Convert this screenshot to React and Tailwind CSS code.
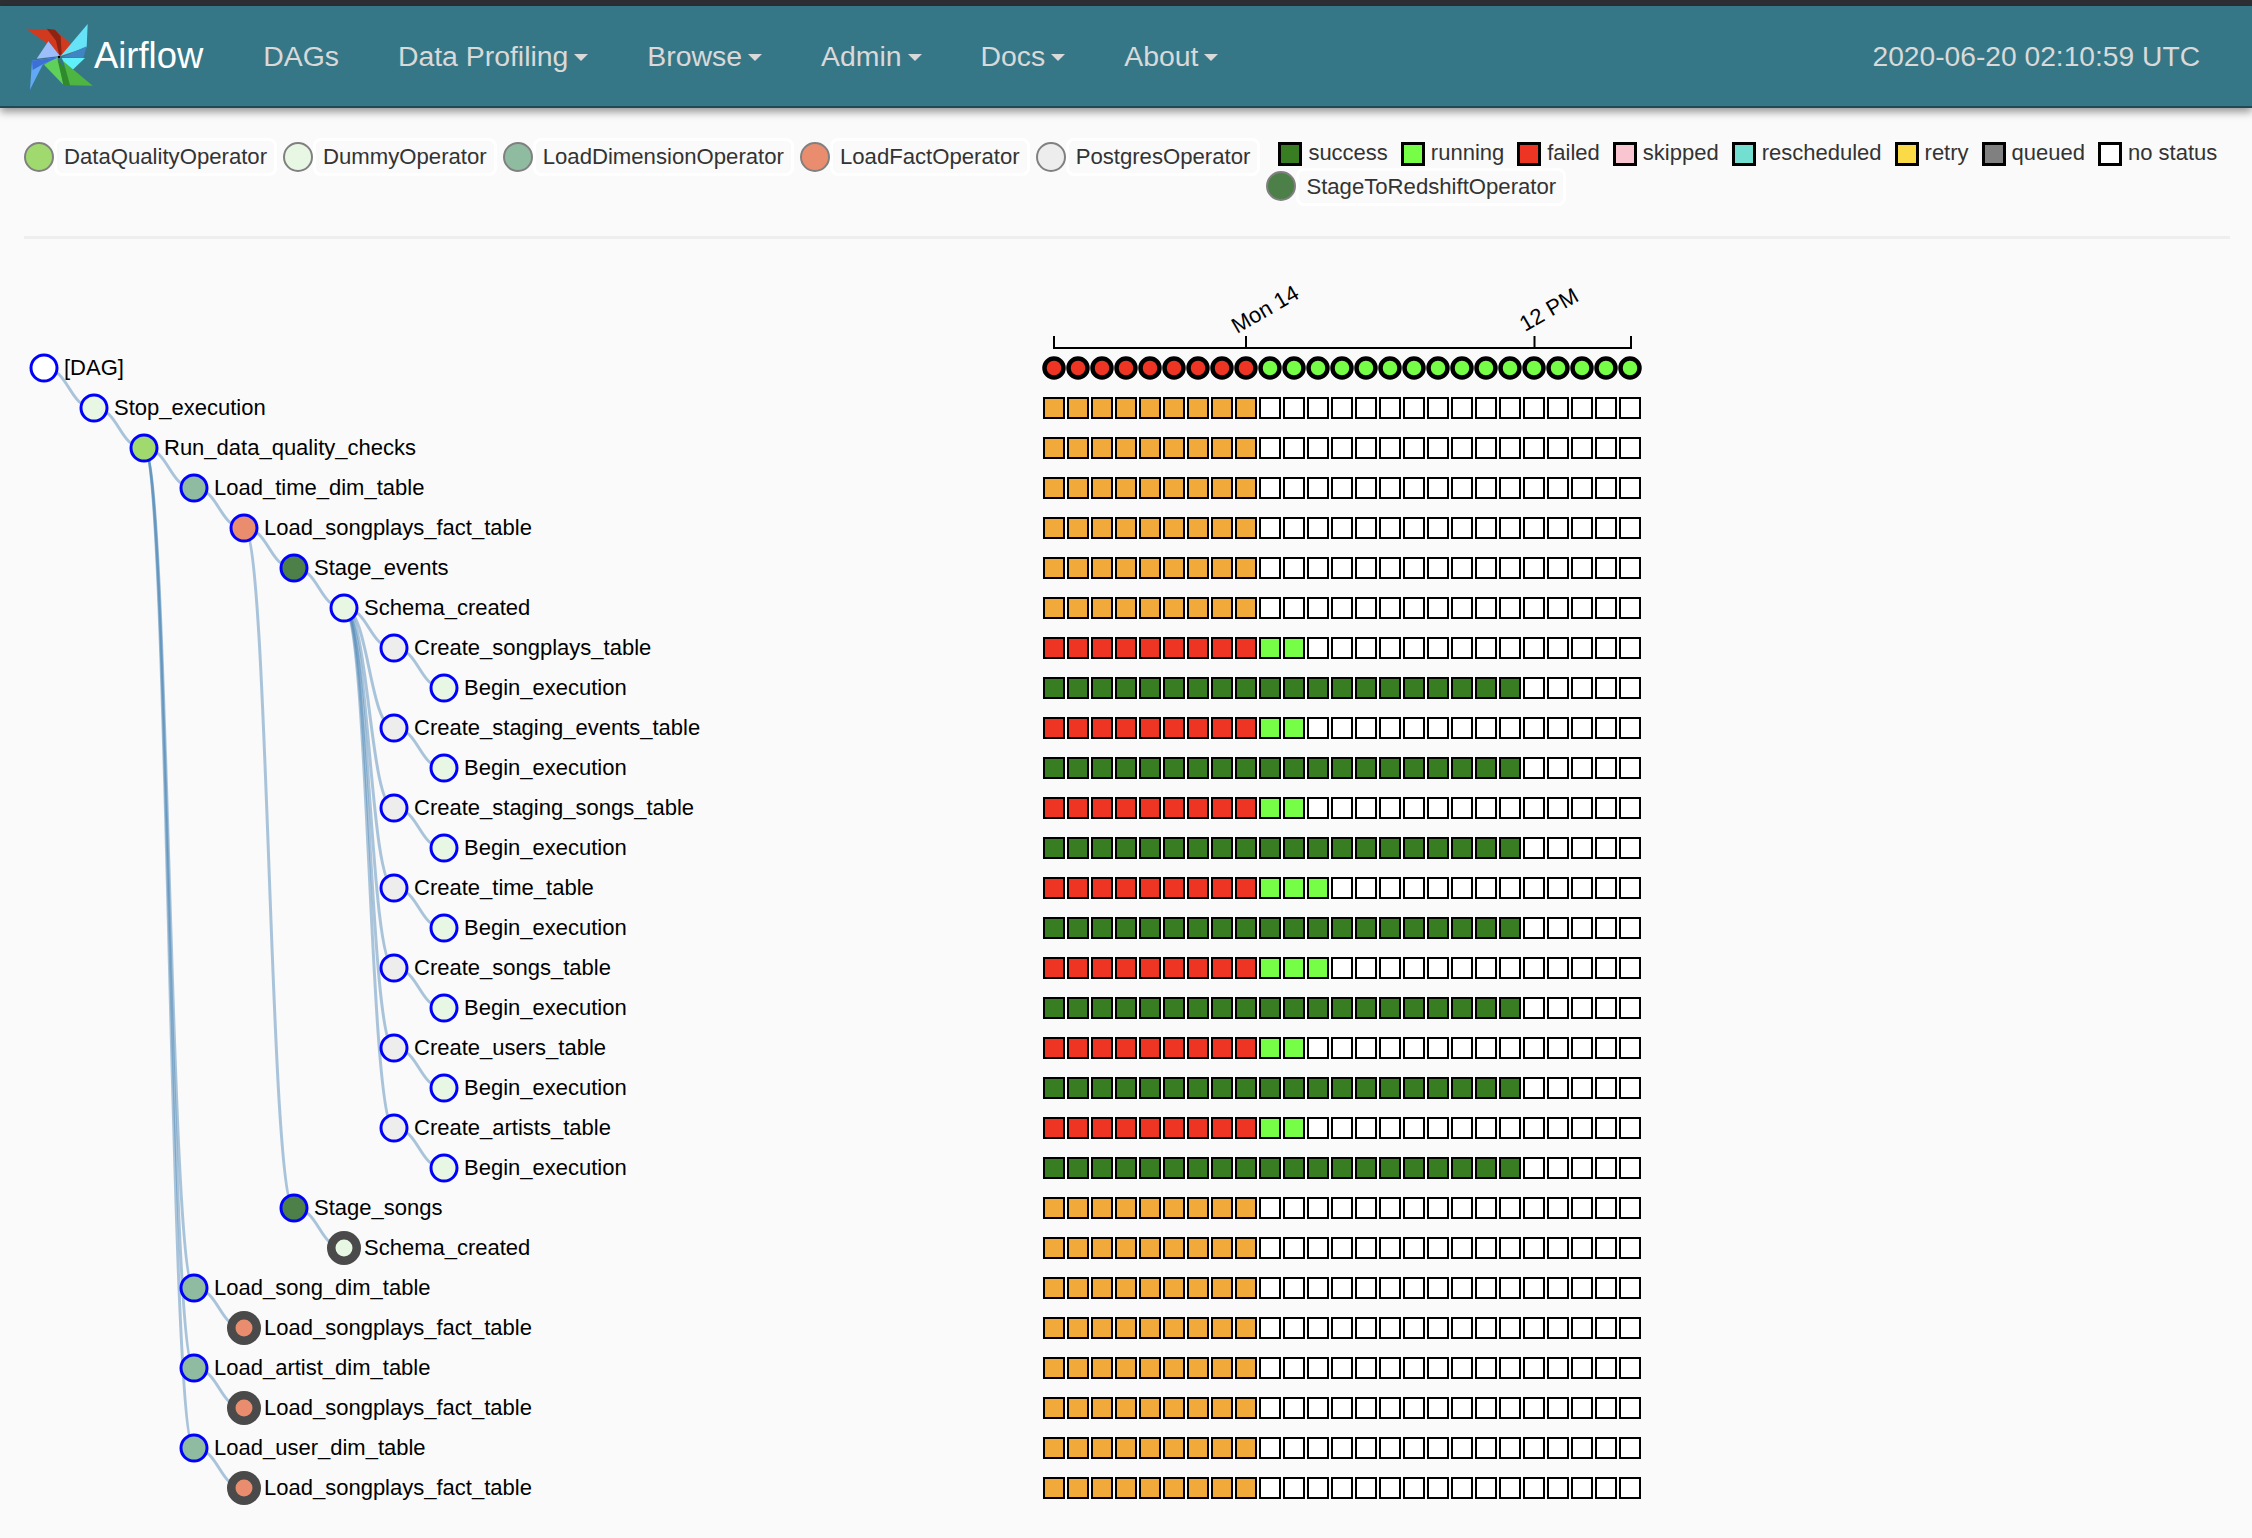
import React from 'react';

const FILL = {
    dag: '#ffffff',
    dummy: '#e8f7e4',
    quality: '#a0da6e',
    dim: '#8fbba0',
    fact: '#ea8d6e',
    pg: '#ededed',
    stage: '#4d8049',
};

const COLOR = {
    failed: '#ee3524',
    running: '#76fd45',
    success: '#387d22',
    retry: '#f1a93a',
    none: '#ffffff',
};

// name, depth, parent row, fill, ghost (already shown elsewhere), heat row
const rows = [
    ['[DAG]', 0, null, 'dag'],
    ['Stop_execution', 1, 0, 'dummy'],
    ['Run_data_quality_checks', 2, 1, 'quality'],
    ['Load_time_dim_table', 3, 2, 'dim'],
    ['Load_songplays_fact_table', 4, 3, 'fact'],
    ['Stage_events', 5, 4, 'stage'],
    ['Schema_created', 6, 5, 'dummy'],
    ['Create_songplays_table', 7, 6, 'pg', false, [9, 2]],
    ['Begin_execution', 8, 7, 'dummy', false, 'ok'],
    ['Create_staging_events_table', 7, 6, 'pg', false, [9, 2]],
    ['Begin_execution', 8, 9, 'dummy', false, 'ok'],
    ['Create_staging_songs_table', 7, 6, 'pg', false, [9, 2]],
    ['Begin_execution', 8, 11, 'dummy', false, 'ok'],
    ['Create_time_table', 7, 6, 'pg', false, [9, 3]],
    ['Begin_execution', 8, 13, 'dummy', false, 'ok'],
    ['Create_songs_table', 7, 6, 'pg', false, [9, 3]],
    ['Begin_execution', 8, 15, 'dummy', false, 'ok'],
    ['Create_users_table', 7, 6, 'pg', false, [9, 2]],
    ['Begin_execution', 8, 17, 'dummy', false, 'ok'],
    ['Create_artists_table', 7, 6, 'pg', false, [9, 2]],
    ['Begin_execution', 8, 19, 'dummy', false, 'ok'],
    ['Stage_songs', 5, 4, 'stage'],
    ['Schema_created', 6, 21, 'dummy', true],
    ['Load_song_dim_table', 3, 2, 'dim'],
    ['Load_songplays_fact_table', 4, 23, 'fact', true],
    ['Load_artist_dim_table', 3, 2, 'dim'],
    ['Load_songplays_fact_table', 4, 25, 'fact', true],
    ['Load_user_dim_table', 3, 2, 'dim'],
    ['Load_songplays_fact_table', 4, 27, 'fact', true],
];

const rowY = (i) => 368 + i * 40;
const nodeX = (depth) => 44 + depth * 50;

const cellColor = (heat, col) => {
    if (heat === 'ok') return col < 20 ? COLOR.success : COLOR.none;
    if (Array.isArray(heat)) {
        if (col < heat[0]) return COLOR.failed;
        return col < heat[0] + heat[1] ? COLOR.running : COLOR.none;
    }
    return col < 9 ? COLOR.retry : COLOR.none;
};

const columns = Array.from({ length: 25 }, (_, i) => i);

const TreeChart = () => (
    <svg width="2252" height="1299" viewBox="0 239 2252 1299" className="block">
        {/* links */}
        {rows.map((r, i) => {
            if (r[2] === null) return null;
            const sx = nodeX(rows[r[2]][1]);
            const sy = rowY(r[2]);
            const tx = nodeX(r[1]);
            const ty = rowY(i);
            const mx = (sx + tx) / 2;
            return (
                <path
                    key={i}
                    d={`M${sx} ${sy}C${mx} ${sy} ${mx} ${ty} ${tx} ${ty}`}
                    fill="none"
                    stroke="#4682b4"
                    strokeOpacity="0.45"
                    strokeWidth="3"
                />
            );
        })}

        {/* nodes */}
        {rows.map((r, i) => (
            <g key={i}>
                <circle
                    cx={nodeX(r[1])}
                    cy={rowY(i)}
                    r={r[4] ? 12.75 : 13}
                    fill={FILL[r[3]]}
                    stroke={r[4] ? '#4a4a4a' : '#0000ff'}
                    strokeWidth={r[4] ? 8.5 : 3}
                />
                <text
                    x={nodeX(r[1]) + 20}
                    y={rowY(i) - 1}
                    fontSize="22"
                    dominantBaseline="central"
                    fill="#000"
                >
                    {r[0]}
                </text>
            </g>
        ))}

        {/* time axis */}
        <path d="M1054 336V348H1631V336M1246 336V348M1534.5 336V348" fill="none" stroke="#000" strokeWidth="2" />
        <text x="1237" y="334" fontSize="22" fill="#000" transform="rotate(-30 1237 334)">Mon 14</text>
        <text x="1525" y="332" fontSize="22" fill="#000" transform="rotate(-30 1525 332)">12 PM</text>

        {/* dag runs */}
        {columns.map((c) => (
            <circle
                key={c}
                cx={1054 + c * 24}
                cy={368}
                r="9.5"
                fill={c < 9 ? COLOR.failed : COLOR.running}
                stroke="#000"
                strokeWidth="4.5"
            />
        ))}

        {/* task instances */}
        {rows.slice(1).map((r, i) =>
            columns.map((c) => (
                <rect
                    key={c}
                    x={1044 + c * 24}
                    y={rowY(i + 1) - 10}
                    width="20"
                    height="20"
                    fill={cellColor(r[5], c)}
                    stroke="#000"
                    strokeWidth="2"
                />
            ))
        )}
    </svg>
);

const PinwheelLogo = () => (
    <svg width="80" height="78" viewBox="0 0 240 234" className="block shrink-0">
        <polygon points="18,32 105,35 163,88 155,103 120,115 75,72" fill="#d13a1f" />
        <polygon points="80,32 105,35 122,55 125,108 118,113 108,68" fill="#8f2312" />
        <polygon points="85,70 120,114 50,122" fill="#9dbdfb" />
        <polygon points="203,18 200,88 122,114" fill="#66e3f7" />
        <polygon points="200,85 190,120 125,118" fill="#3f85c4" />
        <polygon points="125,120 195,120 148,165" fill="#5ff0fb" />
        <polygon points="72,140 112,116 124,160 130,200" fill="#5fd05a" />
        <polygon points="112,122 150,170 152,203 130,200" fill="#2f8a2c" />
        <polygon points="130,130 218,203 150,202 140,165" fill="#4fb542" />
        <polygon points="36,128 116,118 68,140 30,215" fill="#61a9f5" />
        <polygon points="36,128 116,118 70,138 38,156" fill="#3d6fd6" />
        <circle cx="117" cy="117" r="3.5" fill="#000" />
    </svg>
);

const Caret = () => (
    <span className="ml-[6px] mt-[2px] w-0 h-0 border-x-[7.5px] border-x-transparent border-t-[7px] border-t-[#d9d9d9]" />
);

const NavItem = ({ label, menu = true }) => (
    <span className="flex items-center text-[28.4px] text-[#d9d9d9]">
        {label}
        {menu && <Caret />}
    </span>
);

const OperatorLegend = ({ name, color, className = '' }) => (
    <div className="flex items-center">
        <span className={`w-[30px] h-[30px] rounded-full border-2 border-[#808080] ${className}`} style={{ backgroundColor: color }} />
        <span className="h-[38px] px-[7px] pb-[1px] flex items-center border-[3px] border-white rounded-lg text-[22.15px] text-[#333]">
            {name}
        </span>
    </div>
);

const StateLegend = ({ name, color }) => (
    <div className="flex items-center gap-[6px]">
        <span className="w-[24px] h-[24px] border-[3px] border-black" style={{ backgroundColor: color }} />
        <span className="-mt-[2px] text-[22px] leading-[24px] text-[#333]">{name}</span>
    </div>
);

const App = () => {
    return (
        <div className="min-h-screen bg-[#fafafa] font-['Liberation_Sans',Arial,sans-serif]">
            <div className="h-[6px] bg-[#2e2f33]" />

            {/* Navbar */}
            <nav className="relative z-10 h-[102px] pl-[20px] pr-[52px] pt-[1px] flex items-center bg-[#367787] border-b-2 border-[#1d4a54] shadow-[0_4px_8px_rgba(0,0,0,0.4)]">
                <PinwheelLogo />
                <span className="-ml-[6px] text-[36.4px] text-white">Airflow</span>
                <div className="ml-[60px] flex items-center gap-[59px]">
                    <NavItem label="DAGs" menu={false} />
                    <NavItem label="Data Profiling" />
                    <NavItem label="Browse" />
                    <NavItem label="Admin" />
                    <NavItem label="Docs" />
                    <NavItem label="About" />
                </div>
                <span className="ml-auto text-[28.2px] text-[#d9d9d9]">2020-06-20 02:10:59 UTC</span>
            </nav>

            {/* Legend */}
            <div className="pl-[24px] pt-[30px] pb-[30px] flex items-start">
                <div className="flex items-center gap-[6px]">
                    <OperatorLegend name="DataQualityOperator" color={FILL.quality} />
                    <OperatorLegend name="DummyOperator" color={FILL.dummy} />
                    <OperatorLegend name="LoadDimensionOperator" color={FILL.dim} />
                    <OperatorLegend name="LoadFactOperator" color={FILL.fact} />
                    <OperatorLegend name="PostgresOperator" color={FILL.pg} />
                </div>
                <div className="ml-[6px] mt-[4px] flex flex-col gap-[2px]">
                    <div className="ml-[12px] flex items-center gap-[13px]">
                        <StateLegend name="success" color="#387d22" />
                        <StateLegend name="running" color="#76fd45" />
                        <StateLegend name="failed" color="#ee3524" />
                        <StateLegend name="skipped" color="#f8c5d0" />
                        <StateLegend name="rescheduled" color="#72dfd0" />
                        <StateLegend name="retry" color="#fada46" />
                        <StateLegend name="queued" color="#808080" />
                        <StateLegend name="no status" color="#ffffff" />
                    </div>
                    <OperatorLegend name="StageToRedshiftOperator" color={FILL.stage} className="mb-[3px]" />
                </div>
            </div>

            <hr className="ml-[24px] mr-[22px] border-t-[3px] border-[#eeeeee]" />

            <TreeChart />
        </div>
    );
};

export default App;
